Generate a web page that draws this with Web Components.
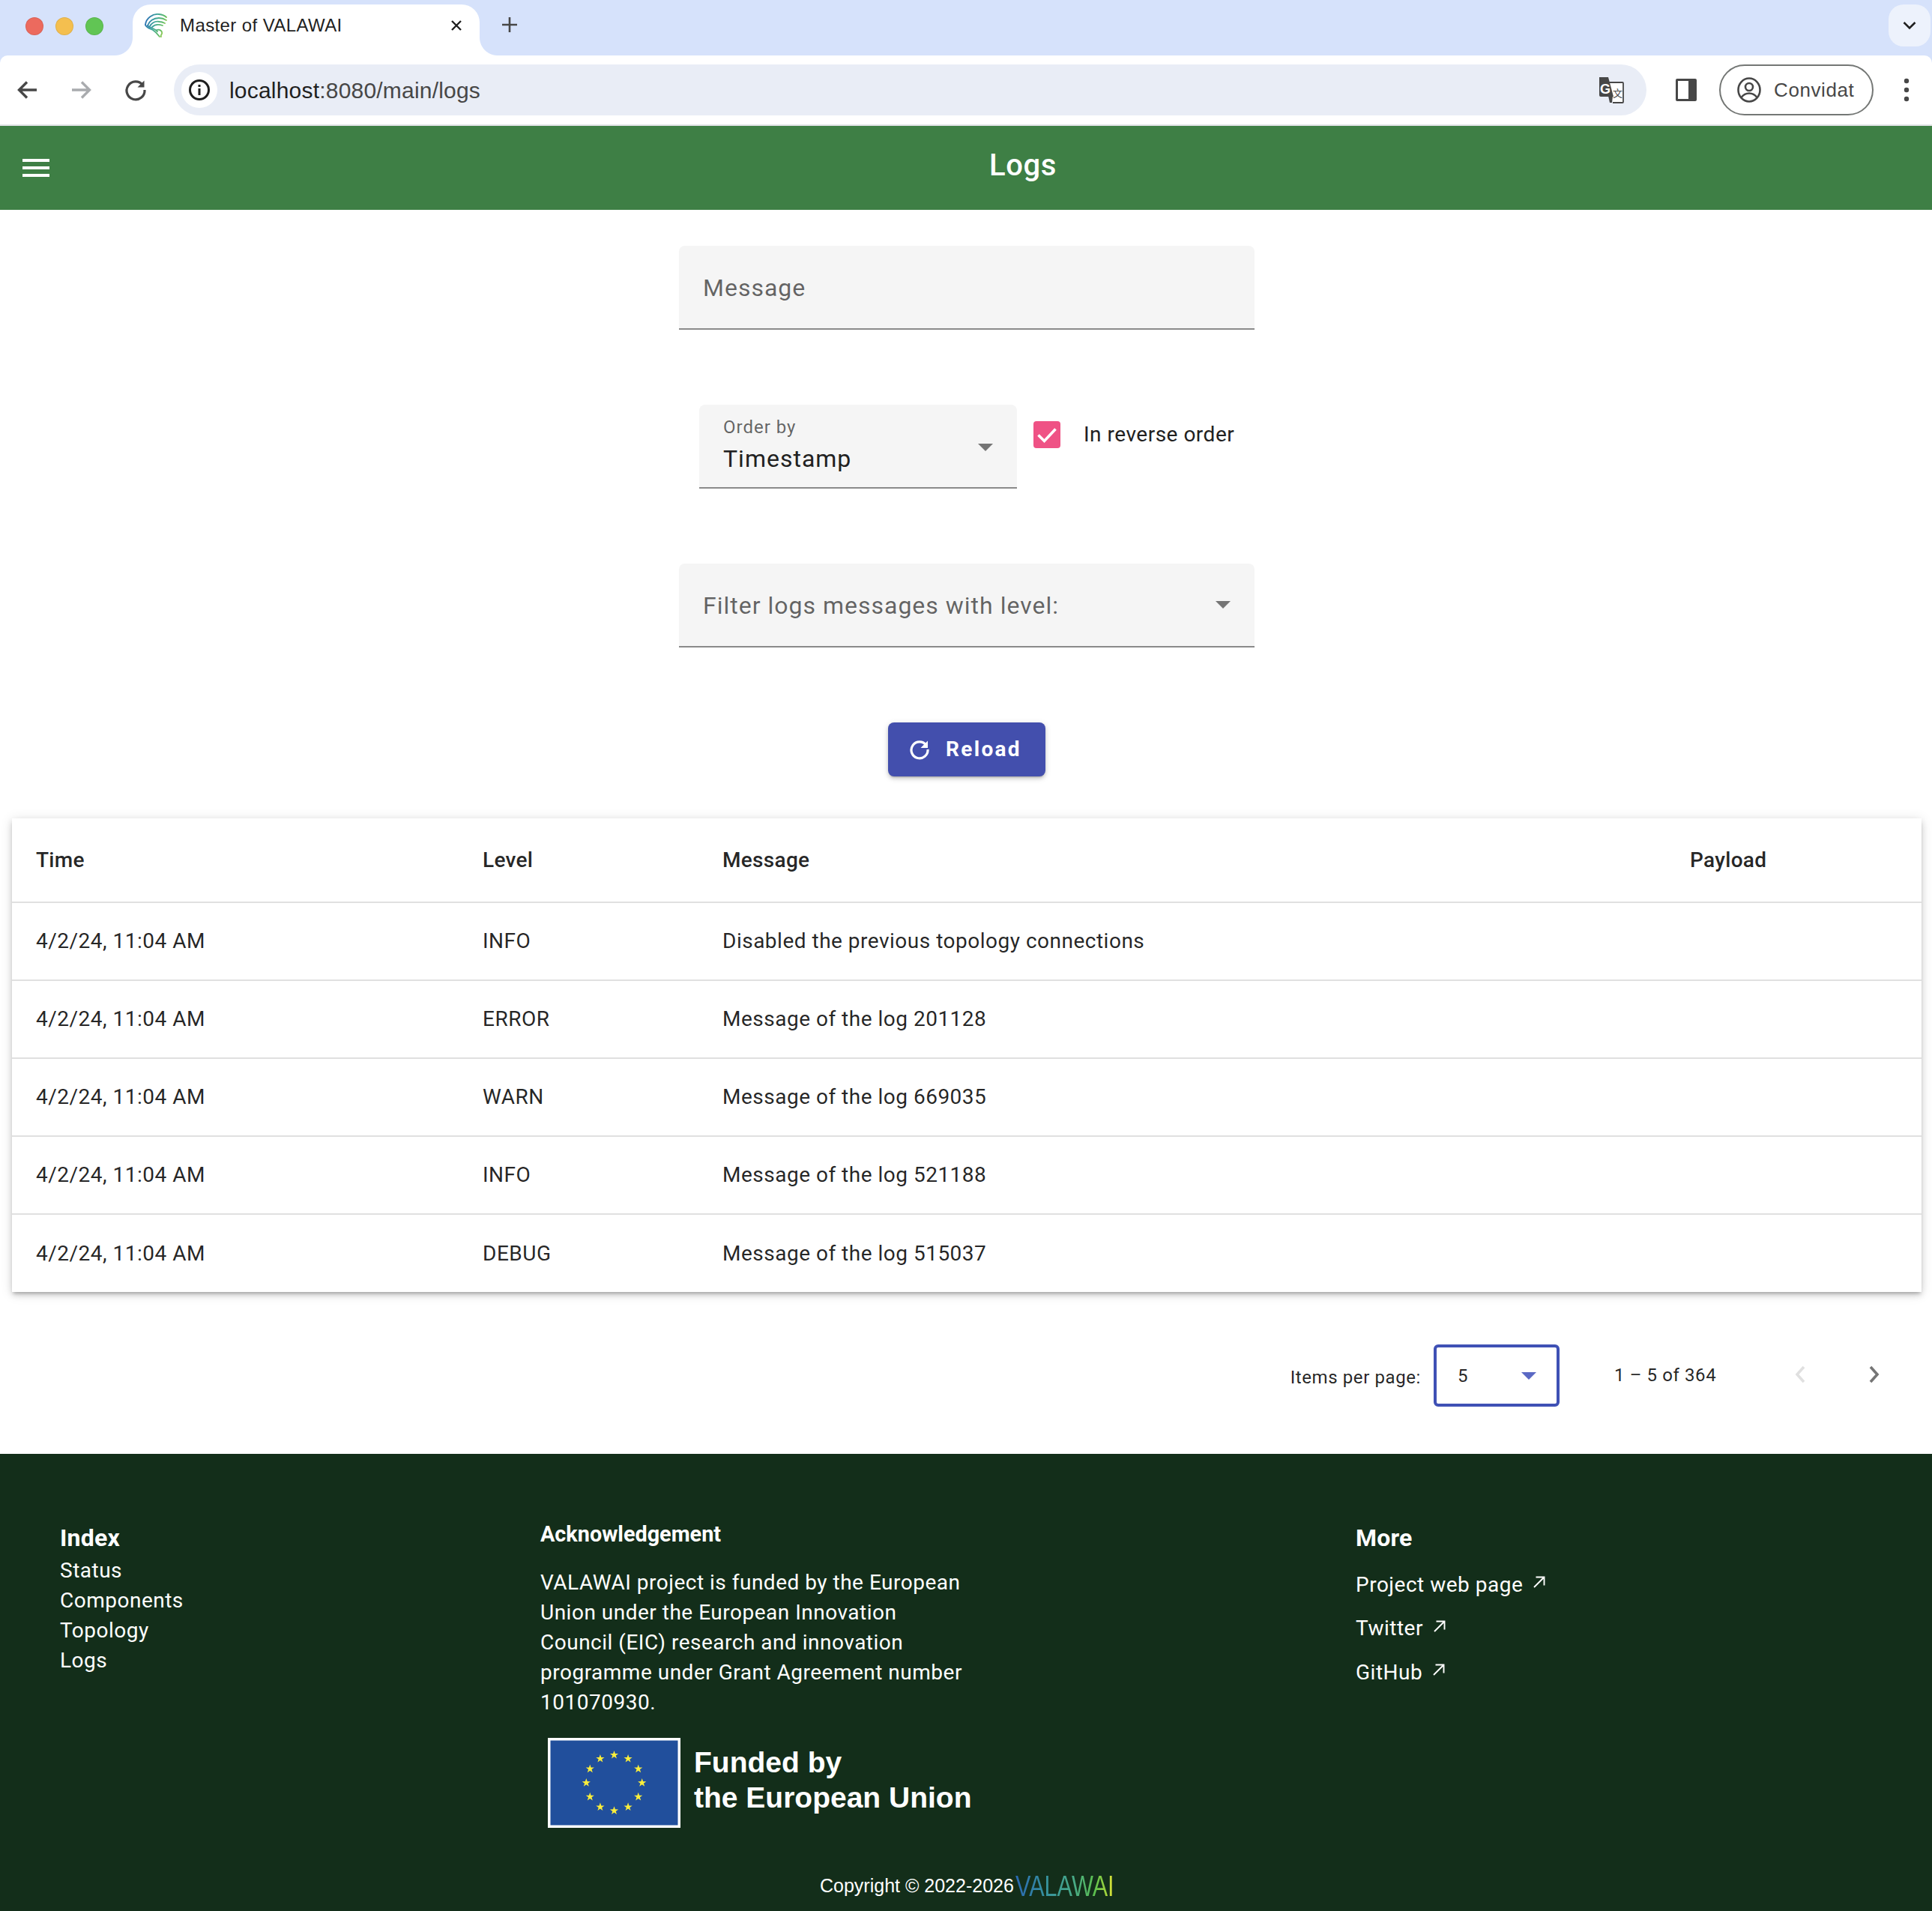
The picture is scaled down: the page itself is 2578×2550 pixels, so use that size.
<!DOCTYPE html>
<html lang="en">
<head>
<meta charset="utf-8">
<title>Master of VALAWAI</title>
<style>
  html, body { margin: 0; padding: 0; background: #fff; }
  body { font-family: Roboto, "Liberation Sans", sans-serif; color: #212121; }
  main-view { padding-top: 48px; }
</style>
</head>
<body>
<browser-chrome></browser-chrome>
<app-bar>Logs</app-bar>
<main-view>
  <filled-field label="Message"></filled-field>
  <order-row></order-row>
  <filled-field label="Filter logs messages with level:" arrow></filled-field>
  <reload-button>Reload</reload-button>
  <log-table></log-table>
  <log-paginator></log-paginator>
</main-view>
<site-footer></site-footer>

<script>
const ARROW = `<svg width="20" height="10" viewBox="0 0 20 10"><path d="M0 0h20L10 10z" fill="currentColor"/></svg>`;

class BrowserChrome extends HTMLElement {
  connectedCallback() {
    this.attachShadow({ mode: 'open' });
    this.shadowRoot.innerHTML = `
      <style>
        :host { display: block; font-family: "Liberation Sans", Arial, sans-serif; color: #1f1f1f; background: #d6e2fb; }
        .strip { height: 74px; background: #d6e2fb; display: flex; align-items: flex-start; position: relative; }
        .lights { display: flex; gap: 16px; padding: 23px 0 0 34px; width: 177px; flex: none; box-sizing: border-box; }
        .lights i { width: 24px; height: 24px; border-radius: 50%; box-sizing: border-box; border: 1px solid rgba(0,0,0,.08); }
        .tab { margin-top: 6px; width: 463px; height: 68px; background: #fff; border-radius: 24px 24px 0 0; position: relative; display: flex; align-items: center; padding: 0 0 12px 16px; box-sizing: border-box; flex: none; }
        .tab::before, .tab::after { content: ''; position: absolute; bottom: 0; width: 24px; height: 24px; background: radial-gradient(circle at 0 0, #d6e2fb 23.5px, #fff 24.5px); }
        .tab::before { left: -24px; }
        .tab::after { right: -24px; transform: scaleX(-1); }
        .tab .title { margin-left: 15px; font-size: 24px; letter-spacing: .4px; flex: 1; white-space: nowrap; }
        .tab .x { margin-right: 23px; display: flex; }
        .plus { margin: 22px 0 0 29px; display: flex; }
        .more { position: absolute; right: 2px; top: 6px; width: 56px; height: 56px; border-radius: 20px; background: #edf2fc; display: flex; align-items: center; justify-content: center; }
        .bar { height: 94px; box-sizing: border-box; border-bottom: 2px solid #e1e3e6; border-radius: 10px 10px 0 0; display: flex; align-items: center; background: #fff; }
        .nav { display: flex; width: 232px; flex: none; box-sizing: border-box; padding-left: 13px; color: #474747; }
        .nav svg { display: block; }
        .nav svg + svg { margin-left: 23px; }
        .nav svg + svg + svg { margin-left: 25px; }
        .omni { flex: 1; height: 68px; border-radius: 34px; background: #e9edf6; display: flex; align-items: center; padding: 0 30px 0 10px; box-sizing: border-box; }
        .info { width: 48px; height: 48px; border-radius: 50%; background: #fff; display: flex; align-items: center; justify-content: center; flex: none; }
        .url { margin-left: 16px; font-size: 30px; letter-spacing: .2px; color: #474747; flex: 1; white-space: nowrap; padding-top: 1px; }
        .url b { font-weight: 400; color: #1f1f1f; }
        .side { margin-left: 39px; flex: none; display: flex; }
        .pill { margin-left: 30px; width: 206px; height: 68px; flex: none; box-sizing: border-box; border: 2px solid #747775; border-radius: 34px; display: flex; align-items: center; padding-left: 22px; gap: 17px; color: #474747; font-size: 26px; letter-spacing: .6px; }
        .dots { margin-left: 40px; margin-right: 30px; flex: none; display: flex; }
      </style>
      <div class="strip">
        <div class="lights">
          <i style="background:#ec6a5e"></i><i style="background:#f4bf4f"></i><i style="background:#61c554"></i>
        </div>
        <div class="tab">
          <svg width="32" height="32" viewBox="0 0 32 32" fill="none" stroke="url(#fav)" stroke-width="1.800" stroke-linecap="round">
            <defs><linearGradient id="fav" gradientUnits="userSpaceOnUse" x1="0" y1="12" x2="30" y2="22"><stop offset="0" stop-color="#2a6fb5"/><stop offset=".4" stop-color="#3fa59a"/><stop offset=".75" stop-color="#64bd63"/><stop offset="1" stop-color="#c9dc45"/></linearGradient></defs>
            <path d="M1 15C2 6 11 0 19 1c4 .5 8 2 10 4"/>
            <path d="M4 16C6 10 12 6 19 6c4 0 7 1 10 3"/>
            <path d="M7 17c3-5 8-7 13-6 3 0 5 1 7 2"/>
            <path d="M10 18c3-3 8-4 14-2"/>
            <path d="M1 15c1 4 6 5 10 7 3 2 6 5 9 9"/>
            <path d="M4 16c2 3 6 3 9 5 2 1 3 2 4 3"/>
            <path d="M16 22c4-1 8 1 7 5-1 2-2 3-1 4"/>
          </svg>
          <span class="title">Master of VALAWAI</span>
          <span class="x"><svg width="16" height="16" viewBox="0 0 16 16"><path d="M2 2l12 12M14 2L2 14" stroke="#1f1f1f" stroke-width="2.400"/></svg></span>
        </div>
        <div class="plus"><svg width="22" height="22" viewBox="0 0 22 22"><path d="M11 1v20M1 11h20" stroke="#474747" stroke-width="2.600"/></svg></div>
        <div class="more"><svg width="18" height="12" viewBox="0 0 18 12"><path d="M1.500 2L9 9.500 16.500 2" fill="none" stroke="#1f1f1f" stroke-width="2.600"/></svg></div>
      </div>
      <div class="bar">
        <div class="nav">
          <svg width="48" height="48" viewBox="0 0 48 48"><path d="M36 24H13M23 13.500L12.500 24 23 34.500" fill="none" stroke="currentColor" stroke-width="3.400"/></svg>
          <svg width="48" height="48" viewBox="0 0 48 48" style="color:#a9abae"><path d="M12 24h23M25 13.500L35.500 24 25 34.500" fill="none" stroke="currentColor" stroke-width="3.400"/></svg>
          <svg width="48" height="48" viewBox="0 0 48 48"><path d="M33.500 17.500A12 12 0 1 0 36 24" fill="none" stroke="currentColor" stroke-width="3.200"/><path d="M35.500 11.500v9h-9z" fill="currentColor"/></svg>
        </div>
        <div class="omni">
          <div class="info"><svg width="30" height="30" viewBox="0 0 30 30"><circle cx="15" cy="15" r="12.500" fill="none" stroke="#1f1f1f" stroke-width="3"/><rect x="13.500" y="13" width="3" height="9" fill="#1f1f1f"/><rect x="13.500" y="8" width="3" height="3" fill="#1f1f1f"/></svg></div>
          <div class="url"><b>localhost</b>:8080/main/logs</div>
          <svg width="36" height="36" viewBox="0 0 36 36" style="flex:none">
            <path d="M16 8h18a1 1 0 0 1 1 1v25a1 1 0 0 1-1 1H21" fill="#fff" stroke="#474747" stroke-width="1.800"/>
            <path d="M15 26h6l-1 9h-3z" fill="#474747"/>
            <path d="M3 1h12l7 26H5a2 2 0 0 1-2-2z" fill="#474747"/>
            <text x="4" y="23" font-family="Liberation Sans" font-size="18" font-weight="700" fill="#fff">G</text>
            <text x="21" y="27" font-family="Noto Sans CJK SC" font-size="13" fill="#474747">文</text>
          </svg>
        </div>
        <div class="side"><svg width="28" height="30" viewBox="0 0 28 30"><rect width="28" height="30" rx="2" fill="#474747"/><rect x="3" y="3" width="14" height="24" fill="#fff"/></svg></div>
        <div class="pill">
          <svg width="32" height="34" viewBox="0 0 32 34" fill="none" stroke="#474747" stroke-width="2.600" style="flex:none"><ellipse cx="16" cy="17" rx="14.500" ry="15.500"/><circle cx="16" cy="13" r="5"/><path d="M5.500 27c3-4 7-5.500 10.500-5.500S23.500 23 26.500 27"/></svg>
          <span>Convidat</span>
        </div>
        <div class="dots"><svg width="8" height="32" viewBox="0 0 8 32" fill="#474747"><circle cx="4" cy="4" r="3.200"/><circle cx="4" cy="16" r="3.200"/><circle cx="4" cy="28" r="3.200"/></svg></div>
      </div>`;
  }
}

class AppBar extends HTMLElement {
  connectedCallback() {
    this.attachShadow({ mode: 'open' });
    this.shadowRoot.innerHTML = `
      <style>
        :host { display: flex; height: 112px; background: #3e7f45; color: #fff; align-items: center; font-family: Roboto, sans-serif; }
        .menu { width: 36px; height: 24px; margin-left: 30px; flex: none; display: flex; flex-direction: column; justify-content: space-between; }
        .menu i { display: block; height: 4px; background: #fff; }
        .title { flex: 1; text-align: center; padding-left: 86px; padding-bottom: 8px; box-sizing: border-box; font-size: 40px; font-weight: 500; letter-spacing: .6px; }
      </style>
      <div class="menu"><i></i><i></i><i></i></div>
      <div class="title"><slot></slot></div>`;
  }
}

class MainView extends HTMLElement {
  connectedCallback() {
    this.attachShadow({ mode: 'open' });
    this.shadowRoot.innerHTML = `
      <style>
        :host { display: flex; flex-direction: column; align-items: center; }
        ::slotted(*) { flex: none; }
      </style>
      <slot></slot>`;
  }
}

class FilledField extends HTMLElement {
  connectedCallback() {
    const hasArrow = this.hasAttribute('arrow');
    this.attachShadow({ mode: 'open' });
    this.shadowRoot.innerHTML = `
      <style>
        :host { display: flex; width: 768px; height: 112px; box-sizing: border-box; background: #f5f5f5; border-radius: 8px 8px 0 0; border-bottom: 2px solid #8a8a8a; align-items: center; padding: 0 32px 0 32px; color: rgba(0,0,0,.6); font-family: Roboto, sans-serif; font-size: 32px; letter-spacing: 1px; margin: 0 0 100px 2px; }
        span { flex: 1; margin-top: 1px; }
        svg { color: #757575; }
      </style>
      <span>${this.getAttribute('label')}</span>
      ${hasArrow ? ARROW : ''}`;
  }
}

class OrderRow extends HTMLElement {
  connectedCallback() {
    this.attachShadow({ mode: 'open' });
    this.shadowRoot.innerHTML = `
      <style>
        :host { display: flex; align-items: flex-start; width: 768px; height: 112px; box-sizing: border-box; padding-left: 27px; margin: 0 0 100px 2px; font-family: Roboto, sans-serif; }
        .select { width: 424px; height: 112px; box-sizing: border-box; background: #f5f5f5; border-radius: 8px 8px 0 0; border-bottom: 2px solid #8a8a8a; padding: 16px 32px 0 32px; position: relative; flex: none; }
        .label { font-size: 24px; letter-spacing: 1px; color: rgba(0,0,0,.6); line-height: 28px; }
        .value { font-size: 32px; letter-spacing: 1px; color: #212121; line-height: 40px; margin-top: 8px; }
        svg.arrow { position: absolute; right: 32px; top: 52px; color: #757575; }
        .check { margin: 22px 0 0 22px; width: 36px; height: 36px; background: #ef5285; border-radius: 4px; flex: none; }
        .text { margin: 22px 0 0 31px; font-size: 28px; letter-spacing: .5px; color: #212121; line-height: 36px; white-space: nowrap; }
      </style>
      <div class="select">
        <div class="label">Order by</div>
        <div class="value">Timestamp</div>
        <svg class="arrow" width="20" height="10" viewBox="0 0 20 10"><path d="M0 0h20L10 10z" fill="currentColor"/></svg>
      </div>
      <div class="check"><svg width="36" height="36" viewBox="0 0 36 36"><path d="M6.500 18.500l8 8 15-16" fill="none" stroke="#fff" stroke-width="3.600"/></svg></div>
      <div class="text">In reverse order</div>`;
  }
}

class ReloadButton extends HTMLElement {
  connectedCallback() {
    this.attachShadow({ mode: 'open' });
    this.shadowRoot.innerHTML = `
      <style>
        :host { display: flex; width: 210px; height: 72px; box-sizing: border-box; align-items: center; justify-content: center; gap: 21px; padding: 0 4px 1px 0; background: #434fad; color: #fff; border-radius: 8px; font-family: Roboto, sans-serif; font-size: 28px; font-weight: 700; letter-spacing: 2.300px; box-shadow: 0 3px 2px -2px rgba(0,0,0,.2), 0 3px 5px rgba(0,0,0,.14), 0 2px 10px rgba(0,0,0,.12); margin: 0 0 56px 2px; }
      </style>
      <svg width="28" height="28" viewBox="0 0 28 28"><path d="M23 8.500A11 11 0 1 0 25 14" fill="none" stroke="#fff" stroke-width="3.200"/><path d="M25 2.500v9.500h-9.500z" fill="#fff"/></svg>
      <slot></slot>`;
  }
}

const LOG_ROWS = [
  ['4/2/24, 11:04 AM', 'INFO', 'Disabled the previous topology connections'],
  ['4/2/24, 11:04 AM', 'ERROR', 'Message of the log 201128'],
  ['4/2/24, 11:04 AM', 'WARN', 'Message of the log 669035'],
  ['4/2/24, 11:04 AM', 'INFO', 'Message of the log 521188'],
  ['4/2/24, 11:04 AM', 'DEBUG', 'Message of the log 515037'],
];

class LogTable extends HTMLElement {
  connectedCallback() {
    this.attachShadow({ mode: 'open' });
    const rows = LOG_ROWS.map(r => `<div class="row">${r.map(c => `<span>${c}</span>`).join('')}<span></span></div>`).join('');
    this.shadowRoot.innerHTML = `
      <style>
        :host { display: block; align-self: stretch; margin: 0 14px 0 16px; background: #fff; font-family: Roboto, sans-serif; font-size: 28px; letter-spacing: .5px; color: rgba(0,0,0,.87); box-shadow: 0 4px 4px -2px rgba(0,0,0,.2), 0 4px 8px rgba(0,0,0,.14), 0 2px 16px rgba(0,0,0,.12); }
        .row { display: grid; grid-template-columns: 596px 320px 1291px 1fr; padding: 0 0 1px 32px; height: 104px; align-items: center; border-top: 2px solid #e0e0e0; box-sizing: border-box; }
        .row:last-child { height: 105px; }
        .head { height: 111px; border-top: 0; font-weight: 500; padding-bottom: 1px; letter-spacing: .3px; }
      </style>
      <div class="row head"><span>Time</span><span>Level</span><span>Message</span><span>Payload</span></div>
      ${rows}`;
  }
}

class LogPaginator extends HTMLElement {
  connectedCallback() {
    this.attachShadow({ mode: 'open' });
    this.shadowRoot.innerHTML = `
      <style>
        :host { display: flex; align-self: stretch; height: 216px; box-sizing: border-box; align-items: center; justify-content: flex-end; font-family: Roboto, sans-serif; font-size: 24px; letter-spacing: .5px; color: rgba(0,0,0,.87); padding: 6px 67px 0 0; }
        .per { margin-right: 17px; margin-top: 5px; letter-spacing: .6px; }
        .box { width: 168px; height: 83px; box-sizing: border-box; border: 4px solid #3f51b5; border-radius: 6px; display: flex; align-items: center; padding: 2px 27px 0 28px; justify-content: space-between; color: #5b69c4; }
        .box span { color: rgba(0,0,0,.87); }
        .range { margin-left: 73px; margin-top: -1px; width: 214px; letter-spacing: .6px; }
        .nav { display: flex; gap: 75px; margin-top: -2px; margin-left: 24px; }
      </style>
      <span class="per">Items per page:</span>
      <div class="box"><span>5</span>${ARROW}</div>
      <span class="range">1 – 5 of 364</span>
      <div class="nav">
        <svg width="22" height="24" viewBox="0 0 22 24"><path d="M15 2L6 12l9 10" fill="none" stroke="#e0e0e0" stroke-width="3.600"/></svg>
        <svg width="22" height="24" viewBox="0 0 22 24"><path d="M7 2l9 10-9 10" fill="none" stroke="#757575" stroke-width="3.600"/></svg>
      </div>`;
  }
}

// ring of twelve stars for the flag, placed by angle
function euStars() {
  let out = '';
  for (let i = 0; i < 12; i++) {
    const a = i * Math.PI / 6;
    const cx = 88.5 + 37.2 * Math.sin(a), cy = 60 - 37.2 * Math.cos(a);
    let pts = [];
    for (let k = 0; k < 10; k++) {
      const r = k % 2 ? 2.3 : 5.9, t = k * Math.PI / 5;
      pts.push((cx + r * Math.sin(t)).toFixed(1) + ',' + (cy - r * Math.cos(t)).toFixed(1));
    }
    out += `<polygon points="${pts.join(' ')}"/>`;
  }
  return out;
}

const EXT = `<svg width="16" height="16" viewBox="0 0 16 16"><path d="M1 15L14.500 1.500M3.500 1.500h11v11" fill="none" stroke="#fff" stroke-width="1.900"/></svg>`;

class SiteFooter extends HTMLElement {
  connectedCallback() {
    this.attachShadow({ mode: 'open' });
    this.shadowRoot.innerHTML = `
      <style>
        :host { display: block; height: 610px; background: #132e1a; color: #fff; font-family: Roboto, sans-serif; font-size: 28px; letter-spacing: .5px; box-sizing: border-box; padding-top: 90px; position: relative; }
        .cols { display: grid; grid-template-columns: 641px 1088px 1fr; padding-left: 80px; }
        h3 { margin: 0; font-size: 32px; font-weight: 700; line-height: 44px; letter-spacing: .2px; }
        h4 { margin: -5px 0 0; font-size: 28.800px; font-weight: 700; line-height: 44px; letter-spacing: 0; }
        .index div { line-height: 40px; }
        .index h3 { margin-bottom: 2px; }
        .ack p { margin: 23px 0 0; line-height: 40px; width: 570px; }
        .eu { display: flex; align-items: flex-start; margin: 27px 0 0 10px; gap: 18px; }
        .eu svg { flex: none; }
        .eu div { font-family: "Liberation Sans", Arial, sans-serif; font-weight: 700; font-size: 39px; line-height: 47px; letter-spacing: 0; padding-top: 9px; }
        .more a { display: flex; align-items: center; gap: 14px; height: 58.500px; }
        .more a:first-of-type { margin-top: 11px; }
        .more svg { margin-top: -6px; }
        .copy { position: absolute; left: 1094px; top: 555px; display: flex; align-items: center; font-size: 25px; letter-spacing: 0; line-height: 40px; white-space: nowrap; font-family: "Liberation Sans", Arial, sans-serif; }
        .logo { margin: 2px 0 0 2px; width: 130px; height: 40px; display: block; }
        .logo span { display: inline-block; font-size: 39px; line-height: 40px; transform: scaleX(.785); transform-origin: 0 0; background: linear-gradient(90deg, #2a68b2, #36919f 30%, #48ab85 60%, #5cc04f 80%, #a8d63a 93%, #f3e83a); -webkit-background-clip: text; background-clip: text; color: transparent; }
      </style>
      <div class="cols">
        <div class="index">
          <h3>Index</h3>
          <div>Status</div><div>Components</div><div>Topology</div><div>Logs</div>
        </div>
        <div class="ack">
          <h4>Acknowledgement</h4>
          <p>VALAWAI project is funded by the European Union under the European Innovation Council (EIC) research and innovation programme under Grant Agreement number 101070930.</p>
          <div class="eu">
            <svg width="177" height="120" viewBox="0 0 177 120"><rect width="177" height="120" fill="#fff"/><rect x="3.500" y="3.500" width="170" height="113" fill="#214f9c"/><g fill="#fbee3b">${euStars()}</g></svg>
            <div>Funded by<br>the European Union</div>
          </div>
        </div>
        <div class="more">
          <h3>More</h3>
          <a>Project web page ${EXT}</a>
          <a>Twitter ${EXT}</a>
          <a>GitHub ${EXT}</a>
        </div>
      </div>
      <div class="copy">Copyright © 2022-2026<div class="logo"><span>VALAWAI</span></div></div>`;
  }
}

customElements.define('browser-chrome', BrowserChrome);
customElements.define('app-bar', AppBar);
customElements.define('main-view', MainView);
customElements.define('filled-field', FilledField);
customElements.define('order-row', OrderRow);
customElements.define('reload-button', ReloadButton);
customElements.define('log-table', LogTable);
customElements.define('log-paginator', LogPaginator);
customElements.define('site-footer', SiteFooter);
</script>
</body>
</html>
